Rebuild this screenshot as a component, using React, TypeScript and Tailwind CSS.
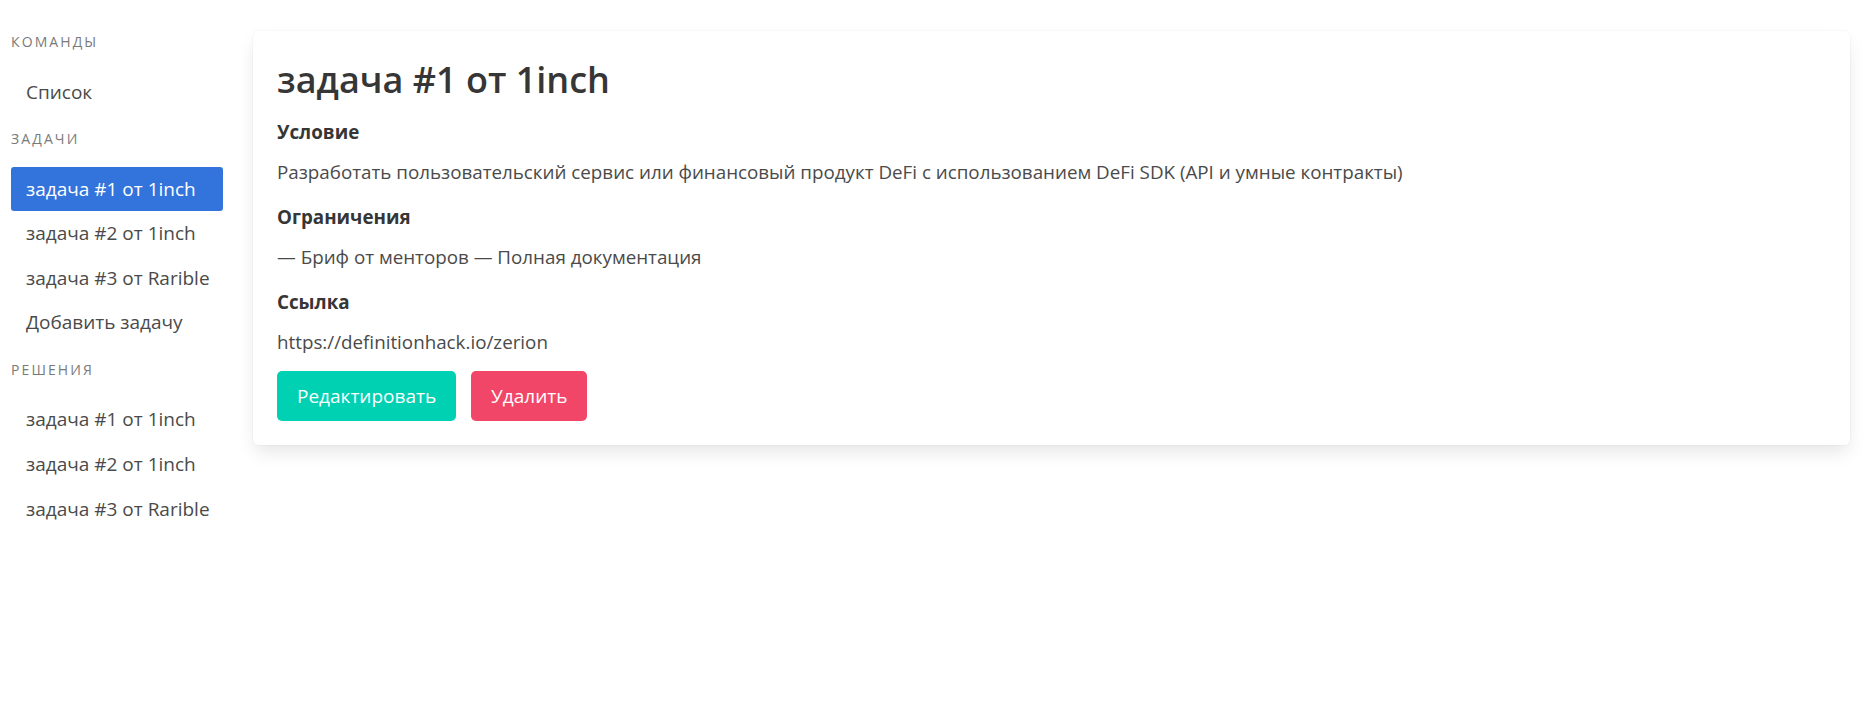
import type { ReactNode } from 'react';

const teams = ['Список'];
const tasks = ['задача #1 от 1inch', 'задача #2 от 1inch', 'задача #3 от Rarible', 'Добавить задачу'];
const solutions = ['задача #1 от 1inch', 'задача #2 от 1inch', 'задача #3 от Rarible'];

function MenuLabel({ children, first }: { children: ReactNode; first?: boolean }) {
    return (
        <p
            className={`${first ? '' : 'mt-[16px]'} mb-[19.5px] text-[14px] font-normal uppercase leading-[17px] tracking-[0.15em] text-[#7a7a7a]`}
        >
            {children}
        </p>
    );
}

function MenuList({ items, active }: { items: string[]; active?: number }) {
    return (
        <ul>
            {items.map((item, i) => (
                <li key={item + i}>
                    <a
                        className={`block whitespace-nowrap rounded-[3px] px-[15px] py-[9px] leading-[26.6px] ${
                            i === active ? 'bg-[#3273dc] text-white' : 'text-[#4a4a4a]'
                        }`}
                    >
                        {item}
                    </a>
                </li>
            ))}
        </ul>
    );
}

function Section({ title, children }: { title: string; children: ReactNode }) {
    return (
        <div className="mb-[18px]">
            <p className="mb-[13px] font-bold leading-[27px] text-[#363636]">{title}</p>
            <p className="leading-[27px] text-[#4a4a4a]">{children}</p>
        </div>
    );
}

export default function App() {
    return (
        <div className="flex min-h-screen bg-white font-['Open_Sans',sans-serif] text-[19px] text-[#4a4a4a]">
            <aside className="ml-[11px] mt-[33px] w-[212px] shrink-0">
                <MenuLabel first>Команды</MenuLabel>
                <MenuList items={teams} />
                <MenuLabel>Задачи</MenuLabel>
                <MenuList items={tasks} active={0} />
                <MenuLabel>Решения</MenuLabel>
                <MenuList items={solutions} />
            </aside>
            <main className="ml-[30px] mr-[16px] mt-[31px] flex-1 text-[18.8px]">
                <div className="rounded-[6px] bg-white px-[24px] pb-[24px] pt-[29px] shadow-[0_9px_18px_-2px_rgba(10,10,10,0.1),0_0_0_1px_rgba(10,10,10,0.02)]">
                    <h1 className="mb-[19px] text-[36px] font-semibold leading-[40px] text-[#363636]">
                        задача #1 от 1inch
                    </h1>
                    <Section title="Условие">
                        Разработать пользовательский сервис или финансовый продукт DeFi с использованием DeFi SDK (API и умные контракты)
                    </Section>
                    <Section title="Ограничения">— Бриф от менторов — Полная документация</Section>
                    <div className="mb-[15px]">
                        <p className="mb-[13px] font-bold leading-[27px] text-[#363636]">Ссылка</p>
                        <p className="leading-[27px] text-[#4a4a4a]">https://definitionhack.io/zerion</p>
                    </div>
                    <div className="flex gap-[15px]">
                        <button className="h-[50px] rounded-[5px] bg-[#00d1b2] px-[20px] text-[19px] text-white">
                            Редактировать
                        </button>
                        <button className="h-[50px] rounded-[5px] bg-[#f14668] px-[20px] text-[19px] text-white">
                            Удалить
                        </button>
                    </div>
                </div>
            </main>
        </div>
    );
}
